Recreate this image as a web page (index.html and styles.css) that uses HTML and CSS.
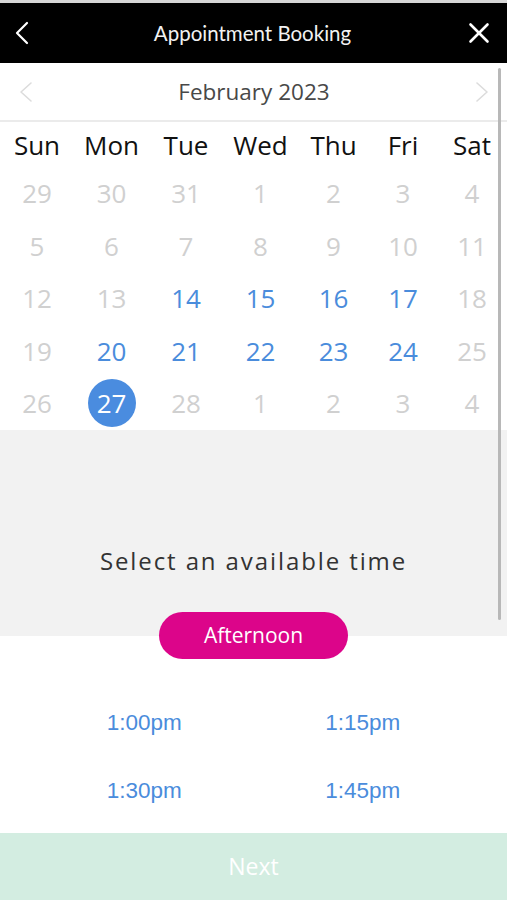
FILE: index.html
```html
<!DOCTYPE html>
<html lang="en">

<head>
    <meta charset="UTF-8">
    <meta name="viewport" content="width=device-width, initial-scale=1.0">
    <title>Appointment Booking</title>
    <link rel="stylesheet" href="styles.css">
</head>

<body>
    <div class="app">
        <div class="topbar"></div>

        <header class="header">
            <svg class="header-icon" width="24" height="24" viewBox="0 0 24 24">
                <polyline points="17,2 7,12 17,22" fill="none" stroke="#fff" stroke-width="2.2" stroke-linecap="round" stroke-linejoin="round"/>
            </svg>
            <h1 class="header-title">Appointment Booking</h1>
            <svg class="header-icon" width="24" height="24" viewBox="0 0 24 24">
                <line x1="3.5" y1="3.5" x2="20.5" y2="20.5" stroke="#fff" stroke-width="2.6" stroke-linecap="round"/>
                <line x1="20.5" y1="3.5" x2="3.5" y2="20.5" stroke="#fff" stroke-width="2.6" stroke-linecap="round"/>
            </svg>
        </header>

        <!-- calendar -->
        <div class="month">
            <svg width="14" height="22" viewBox="0 0 14 22">
                <polyline points="12,2 2,11 12,20" fill="none" stroke="#dcdcdc" stroke-width="1.6" stroke-linecap="round" stroke-linejoin="round"/>
            </svg>
            <span class="month-name">February 2023</span>
            <svg width="14" height="22" viewBox="0 0 14 22">
                <polyline points="2,2 12,11 2,20" fill="none" stroke="#dcdcdc" stroke-width="1.6" stroke-linecap="round" stroke-linejoin="round"/>
            </svg>
        </div>

        <div class="week weekdays">
            <div>Sun</div>
            <div>Mon</div>
            <div>Tue</div>
            <div>Wed</div>
            <div>Thu</div>
            <div>Fri</div>
            <div>Sat</div>
        </div>

        <div class="week days">
            <div class="off">29</div><div class="off">30</div><div class="off">31</div><div class="off">1</div><div class="off">2</div><div class="off">3</div><div class="off">4</div>
            <div class="off">5</div><div class="off">6</div><div class="off">7</div><div class="off">8</div><div class="off">9</div><div class="off">10</div><div class="off">11</div>
            <div class="off">12</div><div class="off">13</div><div class="on">14</div><div class="on">15</div><div class="on">16</div><div class="on">17</div><div class="off">18</div>
            <div class="off">19</div><div class="on">20</div><div class="on">21</div><div class="on">22</div><div class="on">23</div><div class="on">24</div><div class="off">25</div>
            <div class="off">26</div><div class="picked"><span>27</span></div><div class="off">28</div><div class="off">1</div><div class="off">2</div><div class="off">3</div><div class="off">4</div>
        </div>

        <!-- times -->
        <section class="times-panel">
            <p class="times-title">Select an available time</p>
        </section>

        <div class="period">
            <button class="period-btn">Afternoon</button>
        </div>

        <div class="slots">
            <div class="slot">1:00pm</div>
            <div class="slot">1:15pm</div>
            <div class="slot">1:30pm</div>
            <div class="slot">1:45pm</div>
        </div>

        <button class="next">Next</button>

        <div class="scrollbar"></div>
    </div>
</body>

</html>
```

FILE: styles.css
```css
* {
    margin: 0;
    padding: 0;
    box-sizing: border-box;
}

body {
    width: 507px;
    height: 900px;
    overflow: hidden;
    background: #fff;
    font-family: "Open Sans", "Liberation Sans", sans-serif;
}

.app {
    position: relative;
    height: 900px;
    display: flex;
    flex-direction: column;
}

.topbar {
    height: 3px;
    background: #d6d6d6;
}

/* header */
.header {
    height: 60px;
    background: #000;
    display: flex;
    align-items: center;
    justify-content: space-between;
    padding: 0 16px 0 10px;
}

.header-title {
    font-family: Lato, "Open Sans", sans-serif;
    font-weight: 400;
    font-size: 20.5px;
    color: #f2f2f2;
    padding-left: 4px;
}

/* calendar */
.month {
    height: 59px;
    border-bottom: 2px solid #ebebeb;
    display: flex;
    align-items: center;
    justify-content: space-between;
    padding: 0 18px 0 19px;
}

.month-name {
    font-size: 22.5px;
    color: #484848;
}

.week {
    display: grid;
    grid-template-columns: 74px 75px 74px 75px 71px 68px 70px;
    text-align: center;
}

.weekdays {
    height: 45px;
    line-height: 45px;
    padding-top: 1px;
    font-size: 26px;
    color: #111;
}

.days {
    grid-auto-rows: 52.5px;
    font-size: 26px;
}

.days div {
    display: flex;
    align-items: center;
    justify-content: center;
}

.days .off {
    color: #d0d0d0;
}

.days .on {
    color: #4a8cdc;
}

.days .picked span {
    width: 48px;
    height: 48px;
    border-radius: 50%;
    background: #4a8cdf;
    color: #fff;
    display: flex;
    align-items: center;
    justify-content: center;
}

/* times */
.times-panel {
    height: 206px;
    background: #f2f2f2;
    padding-top: 116px;
    text-align: center;
}

.times-title {
    font-size: 24px;
    line-height: 30px;
    letter-spacing: 1.9px;
    color: #333;
}

.period {
    display: flex;
    justify-content: center;
    margin-top: -24px;
}

.period-btn {
    width: 189px;
    height: 47px;
    border: none;
    border-radius: 24px;
    background: #dc058a;
    color: #fff;
    font-family: "Open Sans", sans-serif;
    font-size: 21px;
}

.slots {
    display: grid;
    grid-template-columns: 1fr 1fr;
    grid-auto-rows: 68px;
    padding: 30px 35px 8px;
}

.slot {
    font-family: "Liberation Sans", Arial, sans-serif;
    font-size: 22.5px;
    line-height: 68px;
    text-align: center;
    color: #4a8cdc;
}

.next {
    height: 67px;
    border: none;
    background: #d3ede1;
    color: #fff;
    font-family: "Open Sans", sans-serif;
    font-size: 23px;
}

.scrollbar {
    position: absolute;
    top: 68px;
    right: 6px;
    width: 3px;
    height: 552px;
    border-radius: 2px;
    background: #b8b8b8;
}
```
